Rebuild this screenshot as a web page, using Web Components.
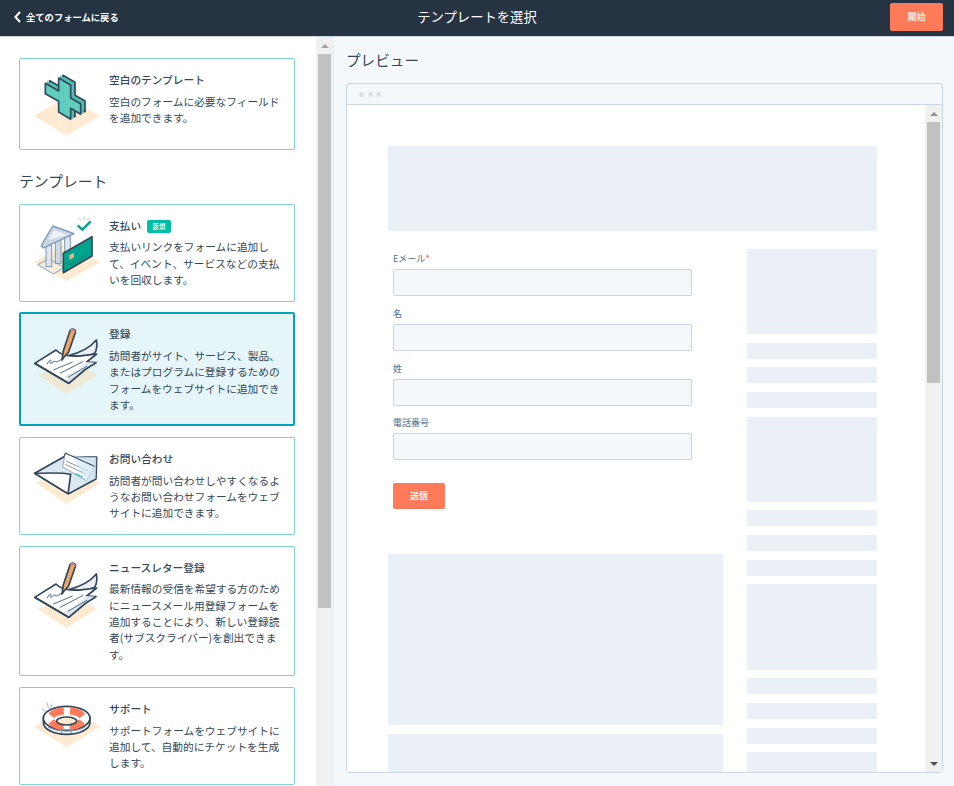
<!DOCTYPE html>
<html lang="ja">
<head>
<meta charset="utf-8">
<title>テンプレートを選択</title>
<style>
  html, body { margin: 0; height: 100%; overflow: hidden; }
  body { font-family: "Noto Sans CJK JP", "Noto Sans", sans-serif; color: #33475b; }
</style>
</head>
<body>
<hs-app>
  <hs-header slot="header" back="全てのフォームに戻る" action="開始">テンプレートを選択</hs-header>

  <hs-template-card slot="sidebar" heading="空白のテンプレート" icon="plus" short>空白のフォームに必要なフィールドを追加できます。</hs-template-card>
  <hs-section-title slot="sidebar">テンプレート</hs-section-title>
  <hs-template-card slot="sidebar" heading="支払い" badge="新規" icon="bank">支払いリンクをフォームに追加して、イベント、サービスなどの支払いを回収します。</hs-template-card>
  <hs-template-card slot="sidebar" heading="登録" icon="pencil" selected>訪問者がサイト、サービス、製品、またはプログラムに登録するためのフォームをウェブサイトに追加できます。</hs-template-card>
  <hs-template-card slot="sidebar" heading="お問い合わせ" icon="envelope">訪問者が問い合わせしやすくなるようなお問い合わせフォームをウェブサイトに追加できます。</hs-template-card>
  <hs-template-card slot="sidebar" heading="ニュースレター登録" icon="pencil">最新情報の受信を希望する方のためにニュースメール用登録フォームを追加することにより、新しい登録読者(サブスクライバー)を創出できます。</hs-template-card>
  <hs-template-card slot="sidebar" heading="サポート" icon="lifebuoy">サポートフォームをウェブサイトに追加して、自動的にチケットを生成します。</hs-template-card>

  <hs-preview slot="preview" heading="プレビュー">
    <hs-form-page></hs-form-page>
  </hs-preview>
</hs-app>

<script>
const floorColor = "#feead0";

const floor = () => `
  <polygon points="18,150 116,92 216,150 116,208" fill="${floorColor}"/>
  <polygon points="18,150 116,92 216,150 116,208" fill="url(#dots)"/>`;

const defs = `
  <defs>
    <pattern id="dots" width="9" height="9" patternUnits="userSpaceOnUse">
      <circle cx="2" cy="2" r="1.1" fill="#fff" opacity=".7"/>
    </pattern>
    <pattern id="tealdots" width="7" height="7" patternUnits="userSpaceOnUse">
      <circle cx="2" cy="2" r="1.2" fill="#1f8f85" opacity=".5"/>
    </pattern>
  </defs>`;

const plusShape = "52,52 92,75 92,36 128,57 128,96 158,113 158,145 128,127 128,160 92,138 92,106 52,83";

const pencilArt = (shadow) => `
  <polygon points="30,165 128,122 206,165 115,222" fill="${shadow}"/>
  <path d="M118,108 C150,100 185,85 205,60 C208,75 206,90 200,100 L170,110 Z" fill="#eaf0f6" stroke="#33475b" stroke-width="5" stroke-linejoin="round"/>
  <path d="M20,130 L84,90 C100,108 130,112 170,106 L206,102 L176,126 L204,128 L172,148 L122,190 Z" fill="#fff" stroke="#33475b" stroke-width="5" stroke-linejoin="round"/>
  <path d="M122,190 L172,148 L204,128 L176,126 C160,142 140,160 112,168 Z" fill="#dfe8f1"/>
  <path d="M20,130 L122,190 L172,148 L204,128" fill="none" stroke="#33475b" stroke-width="5" stroke-linejoin="round"/>
  <path d="M58,132 C64,118 72,116 68,128 C66,136 76,122 82,124 C84,130 92,122 104,116" fill="none" stroke="#516f90" stroke-width="3"/>
  <path d="M76,150 L134,126 M96,160 L166,124 M120,172 L178,138" fill="none" stroke="#516f90" stroke-width="3"/>
  <path d="M107,112 L102,120 L106,92 L126,32 C130,24 145,28 142,38 L121,98 Z" fill="#eea668" stroke="#33475b" stroke-width="5" stroke-linejoin="round"/>
  <path d="M128,32 C132,27 141,30 140,38" fill="none" stroke="#c98a7c" stroke-width="6"/>`;

const icons = {
  plus: `
    ${floor()}
    <g stroke-linejoin="round">
      <polygon points="${plusShape}" transform="translate(13,-8)" fill="#4fbfb0" stroke="#33475b" stroke-width="5"/>
      <polygon points="${plusShape}" transform="translate(6.5,-4)" fill="#4fbfb0" stroke="#4fbfb0" stroke-width="5"/>
      <polygon points="${plusShape}" fill="#62d0c0" stroke="#33475b" stroke-width="5"/>
      <polygon points="${plusShape}" fill="url(#tealdots)"/>
    </g>`,
  bank: `
    ${floor()}
    <polygon points="30,158 62,140 108,166 76,186" fill="#fbefdc" stroke="#a9b8c8" stroke-width="4" stroke-linejoin="round"/>
    <g stroke="#7c98b6" stroke-width="3">
      <rect x="110" y="72" width="17" height="60" fill="#dfe6ee"/>
      <rect x="82" y="86" width="17" height="68" fill="#cfd9e4"/>
      <rect x="54" y="100" width="17" height="64" fill="#dfe6ee"/>
    </g>
    <polygon points="40,100 74,42 138,65 46,108" fill="#cbd6e2" stroke="#7c98b6" stroke-width="4" stroke-linejoin="round"/>
    <polygon points="62,84 78,54 118,68" fill="#eef2f6"/>
    <polygon points="106,124 192,74 192,132 106,182" fill="#00a38d" stroke="#33475b" stroke-width="5" stroke-linejoin="round"/>
    <polygon points="150,98 190,76 190,130 172,140" fill="url(#tealdots)"/>
    <polygon points="124,130 138,122 138,136 124,144" fill="#f2b27c"/>
    <path d="M124,160 L176,130" stroke="#0b7d70" stroke-width="3"/>
    <path d="M149,40 L163,53 L188,28" fill="none" stroke="#00a38d" stroke-width="7"/>
    <path d="M168,14 L168,24 M154,18 L158,26 M182,18 L178,24" stroke="#b9c7d5" stroke-width="3"/>`,
  pencil: pencilArt(floorColor),
  pencilSelected: pencilArt("#efe8d5"),
  envelope: `
    <polygon points="24,114 122,70 216,114 116,176" fill="${floorColor}"/>
    <polygon points="24,114 122,70 216,114 116,176" fill="url(#dots)"/>
    <path d="M20,85 L108,35 L206,36 L204,102 L122,146 Z" fill="#dbe8f2" stroke="#33475b" stroke-width="5" stroke-linejoin="round"/>
    <polygon points="112,24 198,66 176,108 104,66" fill="#fff" stroke="#8fa6bd" stroke-width="3" stroke-linejoin="round"/>
    <path d="M114,48 L180,78 M112,58 L170,86" stroke="#7c98b6" stroke-width="3"/>
    <path d="M142,86 L164,96" stroke="#00bda5" stroke-width="3"/>
    <polygon points="134,32 205,37 203,100 176,112" fill="#d2e6f2" opacity=".7"/>
    <path d="M20,85 C60,84 100,82 128,88 L120,146 Z" fill="#fff" stroke="#33475b" stroke-width="5" stroke-linejoin="round"/>
    <path d="M108,35 L112,24 L200,64" fill="none" stroke="#33475b" stroke-width="3"/>`,
  lifebuoy: `
    <polygon points="18,95 116,40 216,95 116,157" fill="${floorColor}"/>
    <polygon points="18,95 116,40 216,95 116,157" fill="url(#dots)"/>
    <path d="M46,70 L46,82 C46,104 78,118 116,118 C154,118 186,104 186,82 L186,70 Z" fill="#eef2f6" stroke="#33475b" stroke-width="5"/>
    <ellipse cx="116" cy="70" rx="70" ry="36" fill="#fff" stroke="#33475b" stroke-width="5"/>
    <ellipse cx="116" cy="71" rx="50" ry="24" fill="none" stroke="#ff7a59" stroke-width="22" pathLength="100" stroke-dasharray="17 8" stroke-dashoffset="-4"/>
    <ellipse cx="116" cy="78" rx="30" ry="12" fill="${floorColor}" stroke="#33475b" stroke-width="5"/>
    <path d="M60,96 C84,112 148,112 172,96 M100,100 L100,114 M130,100 L130,114" fill="none" stroke="#7c98b6" stroke-width="3"/>
    <path d="M42,42 L54,50 M56,22 L62,40 M72,26 L68,40" stroke="#a9b8c8" stroke-width="3"/>`
};

class HsIcon extends HTMLElement {
  connectedCallback() {
    const name = this.getAttribute("name");
    this.attachShadow({ mode: "open" }).innerHTML = `
      <style>
        :host { display: block; width: 76px; height: 76px; flex: none; }
        svg { display: block; width: 76px; height: 76px; overflow: visible; }
      </style>
      <svg viewBox="0 0 228 228" aria-hidden="true">${defs}${icons[name] || ""}</svg>`;
  }
}
customElements.define("hs-icon", HsIcon);

class HsScrollbar extends HTMLElement {
  connectedCallback() {
    const thumb = this.getAttribute("thumb") || "100";
    const up = this.getAttribute("up-color") || "#a3a3a3";
    const down = this.hasAttribute("no-down") ? "" : `<div class="btn down"><div class="arrow"></div></div>`;
    this.attachShadow({ mode: "open" }).innerHTML = `
      <style>
        :host { display: flex; flex-direction: column; flex: none; width: 17px; background: #f1f1f1; }
        .btn { height: 17px; flex: none; display: flex; align-items: center; justify-content: center; }
        .btn.down { margin-top: auto; }
        .thumb { margin: 0 2px; background: #c1c1c1; height: ${thumb}px; flex: none; }
        .arrow { width: 0; height: 0; border-left: 4px solid transparent; border-right: 4px solid transparent; }
        .up .arrow { border-bottom: 4px solid ${up}; }
        .down .arrow { border-top: 4px solid #505050; }
      </style>
      <div class="btn up"><div class="arrow"></div></div>
      <div class="thumb"></div>
      ${down}`;
  }
}
customElements.define("hs-scrollbar", HsScrollbar);

const headerTemplate = document.createElement("template");
headerTemplate.innerHTML = `
  <style>
    :host {
      display: grid;
      grid-template-columns: 1fr auto 1fr;
      align-items: center;
      height: 36px;
      background: #253342;
      border-bottom: 1px solid #cbd6e2;
      color: #fff;
      flex: none;
    }
    .back {
      display: flex;
      align-items: center;
      gap: 5px;
      padding: 0 0 2px 14px;
      font-size: 9.3px;
      font-weight: 700;
    }
    .back svg { width: 7px; height: 12px; display: block; }
    .title { font-size: 13.33px; padding-bottom: 4px; }
    button {
      justify-self: end;
      width: 53px;
      height: 28px;
      margin: 0 11px 2px 0;
      border: 0;
      border-radius: 2px;
      background: #ff7a59;
      color: #ffeede;
      font: 700 9px "Noto Sans CJK JP", sans-serif;
      padding: 0 0 1px;
    }
  </style>
  <div class="back">
    <svg viewBox="0 0 7 12"><path d="M6 1 L1.4 6 L6 11" fill="none" stroke="#fff" stroke-width="2"/></svg>
    <span id="back"></span>
  </div>
  <div class="title"><slot></slot></div>
  <button id="action" type="button"></button>`;

class HsHeader extends HTMLElement {
  connectedCallback() {
    const root = this.attachShadow({ mode: "open" });
    root.appendChild(headerTemplate.content.cloneNode(true));
    root.getElementById("back").textContent = this.getAttribute("back");
    root.getElementById("action").textContent = this.getAttribute("action");
  }
}
customElements.define("hs-header", HsHeader);

const cardTemplate = document.createElement("template");
cardTemplate.innerHTML = `
  <style>
    :host {
      display: flex;
      box-sizing: border-box;
      gap: 5px;
      padding: 7px 11px 0 8px;
      min-height: 98px;
      margin-bottom: 10.67px;
      background: #fff;
      border: 1px solid #7fd1de;
      border-radius: 2px;
      color: #33475b;
      font-size: 10.7px;
      line-height: 16.33px;
    }
    :host([short]) { min-height: 92px; margin-bottom: 0; }
    :host([selected]) {
      background: #e5f5f8;
      border: 2px solid #00a4bd;
      padding: 6px 10px 0 7px;
    }
    :host([selected]) .text { padding-bottom: 11px; }
    .text { flex: 1; min-width: 0; padding: 6px 0 12px; }
    h3 {
      margin: 0 0 5.5px;
      font-size: 10.7px;
      line-height: 16.33px;
      font-weight: 500;
      display: flex;
      align-items: center;
      gap: 6px;
    }
    .badge {
      font-size: 6.5px;
      line-height: 13px;
      height: 13px;
      margin-top: 1px;
      padding: 0 5.5px;
      border-radius: 2px;
      background: #00bda5;
      color: #fff;
    }
    .badge:empty { display: none; }
  </style>
  <hs-icon></hs-icon>
  <div class="text">
    <h3><span id="heading"></span><span class="badge" id="badge"></span></h3>
    <slot></slot>
  </div>`;

class HsTemplateCard extends HTMLElement {
  connectedCallback() {
    const root = this.attachShadow({ mode: "open" });
    const content = cardTemplate.content.cloneNode(true);
    let icon = this.getAttribute("icon");
    if (icon == "pencil" && this.hasAttribute("selected")) icon = "pencilSelected";
    content.querySelector("hs-icon").setAttribute("name", icon);
    content.getElementById("heading").textContent = this.getAttribute("heading");
    content.getElementById("badge").textContent = this.getAttribute("badge") || "";
    root.appendChild(content);
  }
}
customElements.define("hs-template-card", HsTemplateCard);

class HsSectionTitle extends HTMLElement {
  connectedCallback() {
    this.attachShadow({ mode: "open" }).innerHTML = `
      <style>
        :host { display: block; margin: 20px 0 12.5px; font-size: 14.8px; line-height: 21px; color: #33475b; }
      </style>
      <slot></slot>`;
  }
}
customElements.define("hs-section-title", HsSectionTitle);

class HsPreview extends HTMLElement {
  connectedCallback() {
    this.attachShadow({ mode: "open" }).innerHTML = `
      <style>
        :host {
          display: flex;
          flex-direction: column;
          flex: 1;
          min-width: 0;
          box-sizing: border-box;
          padding: 12px 11px 13px 12px;
          background: #f5f8fa;
          border-left: 1px solid #e9edf2;
        }
        h2 { margin: 0 0 12px; font-size: 14.6px; line-height: 22px; font-weight: 400; color: #33475b; }
        .frame {
          flex: 1;
          min-height: 0;
          display: flex;
          flex-direction: column;
          border: 1px solid #cbd6e2;
          border-radius: 3px;
          overflow: hidden;
        }
        .bar {
          flex: none;
          box-sizing: border-box;
          height: 21px;
          display: flex;
          align-items: center;
          gap: 3.5px;
          padding-left: 12px;
          border-bottom: 1px solid #cbd6e2;
        }
        .bar i { width: 5px; height: 5px; border-radius: 50%; background: #d9e1ec; }
        .body { flex: 1; min-height: 0; display: flex; background: #fff; }
        .page { flex: 1; min-width: 0; overflow: hidden; }
      </style>
      <h2>${this.getAttribute("heading")}</h2>
      <div class="frame">
        <div class="bar"><i></i><i></i><i></i></div>
        <div class="body">
          <div class="page"><slot></slot></div>
          <hs-scrollbar thumb="261" up-color="#8f8f8f"></hs-scrollbar>
        </div>
      </div>`;
  }
}
customElements.define("hs-preview", HsPreview);

class HsSkeleton extends HTMLElement {
  connectedCallback() {
    this.attachShadow({ mode: "open" }).innerHTML = `
      <style>
        :host { display: block; flex: none; background: #eaf0f6; height: ${this.getAttribute("h")}px; }
      </style>`;
  }
}
customElements.define("hs-skeleton", HsSkeleton);

const fieldTemplate = document.createElement("template");
fieldTemplate.innerHTML = `
  <style>
    :host { display: block; margin-bottom: 7.8px; }
    label { display: block; height: 20px; font-size: 9px; line-height: 20px; color: #516f90; }
    b { font-weight: 700; color: #ff7a59; }
    .input {
      box-sizing: border-box;
      height: 27px;
      background: #f5f8fa;
      border: 1px solid #cbd6e2;
      border-radius: 2px;
    }
  </style>
  <label><slot></slot><b id="req"></b></label>
  <div class="input"></div>`;

class HsField extends HTMLElement {
  connectedCallback() {
    const root = this.attachShadow({ mode: "open" });
    root.appendChild(fieldTemplate.content.cloneNode(true));
    if (this.hasAttribute("required")) root.getElementById("req").textContent = "*";
  }
}
customElements.define("hs-field", HsField);

class HsFormPage extends HTMLElement {
  connectedCallback() {
    const side = [85, 16, 16, 16, 85, 16, 16, 16, 85.5, 16, 16, 16, 85]
      .map((h) => `<hs-skeleton h="${h}"></hs-skeleton>`).join("");
    this.attachShadow({ mode: "open" }).innerHTML = `
      <style>
        :host { display: block; width: 489px; padding: 41px 0 0 41px; }
        .cols { display: grid; grid-template-columns: 335px 130px; column-gap: 24px; margin-top: 18px; }
        form { padding: 0 31px 0 5px; height: 296px; box-sizing: border-box; }
        .left { display: flex; flex-direction: column; gap: 9px; }
        .side { display: flex; flex-direction: column; gap: 8.67px; }
        button {
          display: block;
          width: 52px;
          height: 26px;
          margin-top: 22.6px;
          padding: 0;
          border: 0;
          border-radius: 2px;
          background: #ff7a59;
          color: #fff;
          font: 700 9px "Noto Sans CJK JP", sans-serif;
        }
      </style>
      <hs-skeleton h="85"></hs-skeleton>
      <div class="cols">
        <div class="left">
          <form>
            <hs-field required>Eメール</hs-field>
            <hs-field>名</hs-field>
            <hs-field>姓</hs-field>
            <hs-field>電話番号</hs-field>
            <button type="button">送信</button>
          </form>
          <hs-skeleton h="171"></hs-skeleton>
          <hs-skeleton h="171"></hs-skeleton>
        </div>
        <div class="side">${side}</div>
      </div>`;
  }
}
customElements.define("hs-form-page", HsFormPage);

class HsApp extends HTMLElement {
  connectedCallback() {
    this.attachShadow({ mode: "open" }).innerHTML = `
      <style>
        :host { display: flex; flex-direction: column; height: 786px; overflow: hidden; }
        main { flex: 1; min-height: 0; display: flex; }
        .sidebar {
          flex: none;
          width: 316px;
          box-sizing: border-box;
          padding: 21px 21px 0 19px;
          overflow: hidden;
          background: #fff;
        }
      </style>
      <slot name="header"></slot>
      <main>
        <div class="sidebar"><slot name="sidebar"></slot></div>
        <hs-scrollbar thumb="554" no-down></hs-scrollbar>
        <slot name="preview"></slot>
      </main>`;
  }
}
customElements.define("hs-app", HsApp);
</script>
</body>
</html>
